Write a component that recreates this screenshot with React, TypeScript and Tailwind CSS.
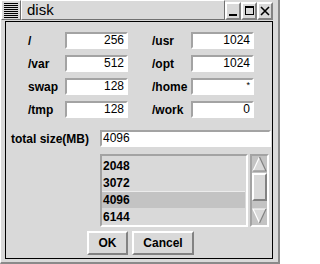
import React from 'react';

const font = { fontFamily: '"Liberation Sans", Arial, sans-serif' };

// Tk-style 3D bevels
const raised = 'border-2 border-t-white border-l-white border-b-[#828282] border-r-[#828282]';
const sunken = 'border-2 border-t-[#a3a3a3] border-l-[#a3a3a3] border-b-white border-r-white';

function Entry({ value, small }: { value: string; small?: boolean }) {
  return (
    <div className={`h-[17px] w-[63px] bg-white ${sunken} flex pr-[2px] justify-end ${small ? 'items-start' : 'items-center'}`}>
      <span className={small ? 'text-[9px] leading-[10px]' : 'text-[12px] leading-[13px]'}>{value}</span>
    </div>
  );
}

function Row({ a, av, b, bv, bSmall }: { a: string; av: string; b: string; bv: string; bSmall?: boolean }) {
  return (
    <div className="flex items-center h-[17px]">
      <div className="w-[37px] text-[12px] font-bold">{a}</div>
      <Entry value={av} />
      <div className="w-[24px]" />
      <div className="w-[39px] text-[12px] font-bold">{b}</div>
      <Entry value={bv} small={bSmall} />
    </div>
  );
}

function TitleButton({ children }: { children: React.ReactNode }) {
  return (
    <div className={`w-[16px] h-[18px] ${raised} border bg-[#d9d9d9] flex items-center justify-center`}>
      {children}
    </div>
  );
}

export default function App() {
  const items = ['2048', '3072', '4096', '6144'];
  return (
    <div style={font} className="w-[280px] h-[264px] bg-[#d9d9d9] text-black border-l border-l-white border-r-2 border-r-[#8a8a8a] border-b-2 border-b-[#8a8a8a] flex flex-col overflow-hidden">
      {/* Title bar */}
      <div className="flex h-[20px] pr-[5px]">
        <div className={`w-[20px] h-[20px] border border-t-white border-l-white border-b-[#707070] border-r-[#707070] flex flex-col justify-center gap-[1px] px-[2px]`}>
          {Array.from({ length: 8 }).map((_, i) => (
            <div key={i} className="h-[1px] bg-black" />
          ))}
        </div>
        <div className="flex-1 border border-t-white border-l-white border-b-[#707070] border-r-[#707070] flex items-center pl-[5px]">
          <span className="text-[15px] leading-[16px]">disk</span>
        </div>
        <div className="flex items-center gap-0 pt-[1px]">
          <TitleButton>
            <div className="w-[8px] h-[2px] bg-black mt-[8px]" />
          </TitleButton>
          <TitleButton>
            <div className="w-[9px] h-[9px] border border-black border-t-[2px]" />
          </TitleButton>
          <TitleButton>
            <svg width="10" height="10" viewBox="0 0 10 10">
              <path d="M1 1 L9 9 M9 1 L1 9" stroke="black" strokeWidth="1.6" />
            </svg>
          </TitleButton>
        </div>
      </div>

      {/* Body frame */}
      <div className="mt-[1px] ml-[4px] mr-[5px] mb-[3px] flex-1 border border-black flex flex-col">
        <div className="pt-[10px] pl-[22px] flex flex-col gap-[6px]">
          <Row a="/" av="256" b="/usr" bv="1024" />
          <Row a="/var" av="512" b="/opt" bv="1024" />
          <Row a="swap" av="128" b="/home" bv="*" bSmall />
          <Row a="/tmp" av="128" b="/work" bv="0" />
        </div>

        <div className="mt-[12px] pl-[5px] flex items-center h-[17px]">
          <div className="w-[89px] text-[12px] font-bold">total size(MB)</div>
          <div className={`h-[17px] w-[171px] bg-white ${sunken} flex items-center pl-[1px]`}>
            <span className="text-[12px] leading-[13px]">4096</span>
          </div>
        </div>

        <div className="mt-[7px] pl-[94px] flex gap-[2px]">
          <div className={`w-[148px] h-[73px] ${sunken} flex flex-col pt-[1px]`}>
            {items.map((it) => (
              <div
                key={it}
                className={`h-[17px] flex items-center pl-[1px] text-[12px] font-bold ${it === '4096' ? 'bg-[#c3c3c3] border-t border-t-[#ececec] mr-[1px]' : ''}`}
              >
                {it}
              </div>
            ))}
          </div>
          <div className={`w-[19px] h-[73px] bg-[#c3c3c3] ${sunken} flex flex-col`}>
            <svg width="15" height="16" viewBox="0 0 15 16" className="block">
              <polygon points="7.5,1 14,15 1,15" fill="#d9d9d9" />
              <path d="M7.5 1 L1 15" stroke="white" strokeWidth="1.2" />
              <path d="M7.5 1 L14 15 L1 15" stroke="#828282" strokeWidth="1.2" fill="none" />
            </svg>
            <div className={`mt-[1px] h-[28px] bg-[#d9d9d9] ${raised}`} />
            <div className="flex-1" />
            <svg width="15" height="16" viewBox="0 0 15 16" className="block mb-[1px]">
              <polygon points="1,1 14,1 7.5,15" fill="#d9d9d9" />
              <path d="M14 1 L1 1 L7.5 15" stroke="white" strokeWidth="1.2" fill="none" />
              <path d="M14 1 L7.5 15" stroke="#828282" strokeWidth="1.2" />
            </svg>
          </div>
        </div>

        <div className="mt-[4px] pl-[81px] flex gap-[4px]">
          <button className={`w-[41px] h-[24px] ${raised} bg-[#d9d9d9] text-[12px] font-bold flex items-center justify-center`}>OK</button>
          <button className={`w-[62px] h-[24px] ${raised} bg-[#d9d9d9] text-[12px] font-bold flex items-center justify-center`}>Cancel</button>
        </div>
      </div>
    </div>
  );
}
